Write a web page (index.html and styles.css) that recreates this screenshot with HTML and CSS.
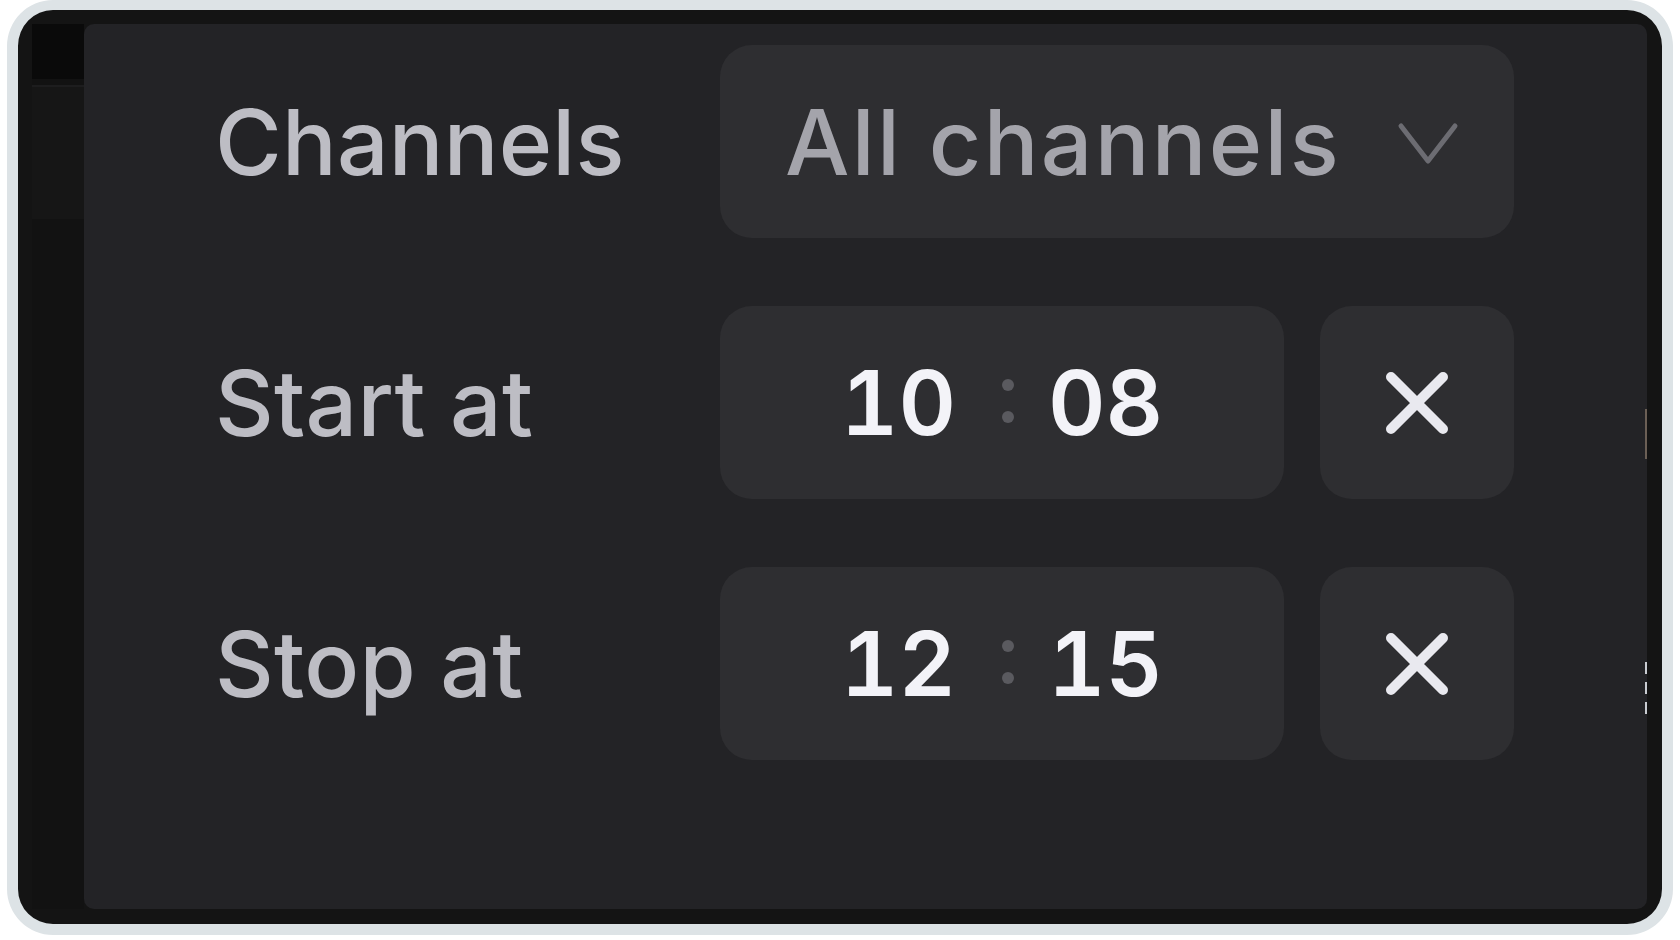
FILE: index.html
```html
<!DOCTYPE html>
<html lang="en">
<head>
<meta charset="utf-8">
<title>Schedule</title>
<link rel="stylesheet" href="styles.css">
</head>
<body>
<div class="device">
  <aside class="sidebar">
    <div class="sb-top"></div>
    <div class="sb-line"></div>
    <div class="sb-mid"></div>
    <div class="sb-rest"></div>
  </aside>
  <main class="panel">
    <div class="form">
      <div class="label">Channels</div>
      <div class="control">
        <div class="select">
          <span class="select-text">All channels</span>
          <svg class="chevron" width="62" height="44" viewBox="0 0 62 44"><polyline points="4,4 31,39 58,4" fill="none" stroke="#6c6c72" stroke-width="5" stroke-linecap="round" stroke-linejoin="round"/></svg>
        </div>
      </div>

      <div class="label">Start at</div>
      <div class="control time-row">
        <div class="time">
          <span class="num hh">10</span>
          <span class="colon"><i></i><i></i></span>
          <span class="num">08</span>
        </div>
        <button class="clear" type="button" aria-label="Clear start time">
          <svg width="66" height="64" viewBox="0 0 66 64"><path d="M7 6 L59 58 M59 6 L7 58" fill="none" stroke="#e9e9ef" stroke-width="10" stroke-linecap="round"/></svg>
        </button>
      </div>

      <div class="label">Stop at</div>
      <div class="control time-row">
        <div class="time">
          <span class="num hh">12</span>
          <span class="colon"><i></i><i></i></span>
          <span class="num">15</span>
        </div>
        <button class="clear" type="button" aria-label="Clear stop time">
          <svg width="66" height="64" viewBox="0 0 66 64"><path d="M7 6 L59 58 M59 6 L7 58" fill="none" stroke="#e9e9ef" stroke-width="10" stroke-linecap="round"/></svg>
        </button>
      </div>
    </div>
    <div class="scroll-mark mark-a"></div>
    <div class="scroll-mark mark-b"></div>
  </main>
</div>
</body>
</html>
```
FILE: styles.css
```css
* { box-sizing: border-box; }

html, body {
  margin: 0;
  padding: 0;
  background: #ffffff;
  width: 1680px;
  height: 940px;
  overflow: hidden;
  font-family: Inter, "Noto Sans", "Liberation Sans", sans-serif;
}

.device {
  margin: 0 7px;
  width: 1666px;
  height: 935px;
  border: 11px solid #dde3e6;
  border-top-width: 10px;
  border-radius: 46px;
  background: #141414;
  display: flex;
  padding: 14px 15px 15px 14px;
}

.sidebar {
  width: 52px;
  display: flex;
  flex-direction: column;
  background: #121212;
}

.sb-top { height: 55px; background: #0a0a0a; }
.sb-line { height: 8px; background: #121212; border-bottom: 2px solid #1d1d1e; }
.sb-mid { height: 132px; background: #161616; }
.sb-rest { flex: 1; background: #121212; }

.panel {
  flex: 1;
  position: relative;
  background: #232326;
  border-radius: 10px;
  padding: 21px 133px 0 131px;
}

.form {
  display: grid;
  grid-template-columns: 1fr 794px;
  grid-auto-rows: 193px;
  row-gap: 68px;
  align-items: center;
}

.label {
  font-size: 91px;
  font-weight: 500;
  color: #bdbdc4;
  letter-spacing: 0.2px;
  white-space: nowrap;
}

.control { height: 100%; }

.select {
  height: 100%;
  background: #2e2e31;
  border-radius: 32px;
  display: flex;
  align-items: center;
  justify-content: space-between;
  padding: 0 55px 0 65px;
}

.select-text {
  font-size: 91px;
  font-weight: 500;
  color: #a4a4ab;
  letter-spacing: 2.3px;
  white-space: nowrap;
}

.chevron { display: block; margin-top: 4px; }

.time-row {
  display: grid;
  grid-template-columns: 1fr 194px;
  column-gap: 36px;
}

.time {
  background: #2e2e31;
  border-radius: 32px;
  display: flex;
  align-items: center;
  justify-content: center;
  gap: 34px;
}

.num {
  font-size: 89px;
  font-weight: 600;
  color: #f3f3f8;
  font-variant-numeric: tabular-nums;
}

.num.hh { margin-right: 12px; }

.colon {
  display: flex;
  flex-direction: column;
  gap: 20px;
  margin-top: -4px;
}

.colon i {
  display: block;
  width: 12px;
  height: 12px;
  border-radius: 50%;
  background: #5a5a5f;
}

.clear {
  border: 0;
  margin: 0;
  padding: 0;
  background: #2e2e31;
  border-radius: 32px;
  display: flex;
  align-items: center;
  justify-content: center;
}

.clear svg { display: block; }

.scroll-mark {
  position: absolute;
  right: 0;
  width: 2px;
}

.mark-a { top: 385px; height: 50px; background: #6b5f55; }
.mark-b { top: 638px; height: 56px; background: repeating-linear-gradient(#c9ccd2 0 12px, transparent 12px 20px); }
```
